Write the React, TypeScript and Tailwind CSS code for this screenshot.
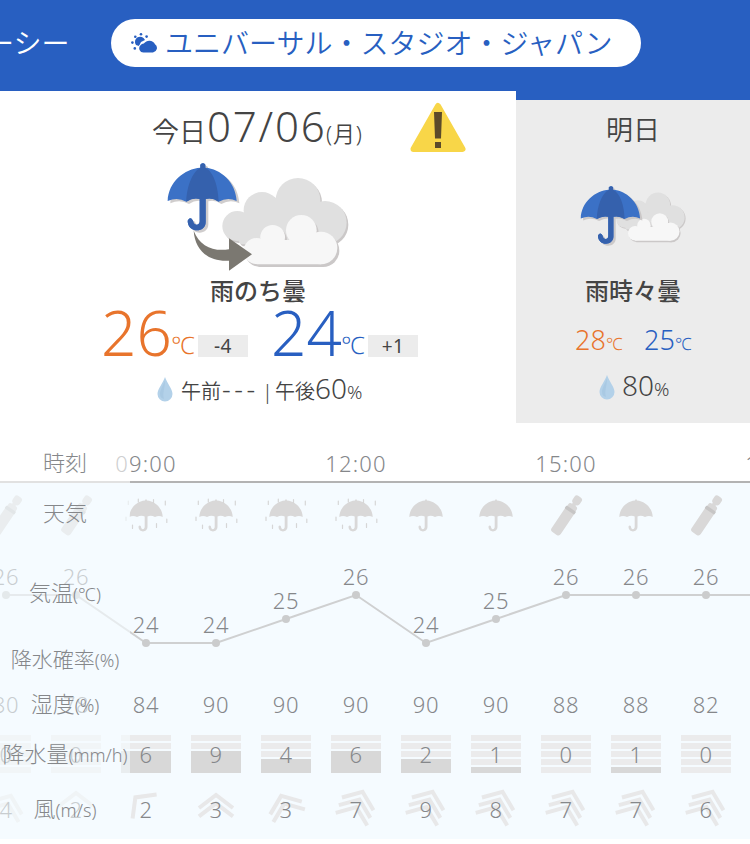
import React from "react";

type Hour = {
  time?: string;
  icon: "fold" | "rain" | "umbrella";
  temp: number;
  humidity: number;
  rain: number;
  level: number;
  wind: number;
  windLevel: number;
  windAngle: number;
};

const hours: Hour[] = [
  { icon: "fold", temp: 26, humidity: 80, rain: 0, level: 0, wind: 4, windLevel: 2, windAngle: 22 },
  { icon: "fold", temp: 26, humidity: 78, rain: 0, level: 0, wind: 2, windLevel: 1, windAngle: 0 },
  { time: "09:00", icon: "rain", temp: 24, humidity: 84, rain: 6, level: 3, wind: 2, windLevel: 1, windAngle: -45 },
  { icon: "rain", temp: 24, humidity: 90, rain: 9, level: 3, wind: 3, windLevel: 2, windAngle: 0 },
  { icon: "rain", temp: 25, humidity: 90, rain: 4, level: 2, wind: 3, windLevel: 2, windAngle: -22 },
  { time: "12:00", icon: "rain", temp: 26, humidity: 90, rain: 6, level: 3, wind: 7, windLevel: 3, windAngle: 22 },
  { icon: "umbrella", temp: 24, humidity: 90, rain: 2, level: 2, wind: 9, windLevel: 3, windAngle: 22 },
  { icon: "umbrella", temp: 25, humidity: 90, rain: 1, level: 1, wind: 8, windLevel: 3, windAngle: 22 },
  { time: "15:00", icon: "fold", temp: 26, humidity: 88, rain: 0, level: 0, wind: 7, windLevel: 3, windAngle: 22 },
  { icon: "umbrella", temp: 26, humidity: 88, rain: 1, level: 1, wind: 7, windLevel: 3, windAngle: 22 },
  { icon: "fold", temp: 26, humidity: 82, rain: 0, level: 0, wind: 6, windLevel: 3, windAngle: 22 },
];

function Umbrella() {
  const shape =
    "M234 303C236 245 285 206 332 203V194Q340 186 347 194V203C392 206 438 245 441 303Q414 290 387 305Q368 292 348 297V366C348 400 294 400 294 362Q302 348 310 362C312 378 330 378 330 364V297Q310 292 290 305Q263 290 234 303Z";
  return (
    <g>
      <path d={shape} transform="translate(8 7)" fill="#c4c1c1" opacity=".8" />
      <path d={shape} fill="#3b71c6" />
      <path
        d="M290 305C291 260 308 215 332 203V194Q340 186 347 194V203C372 215 386 260 387 305Q368 292 348 297V366C348 400 294 400 294 362Q302 348 310 362C312 378 330 378 330 364V297Q310 292 290 305Z"
        fill="#3561ad"
      />
    </g>
  );
}

function BackCloud({ fill }: { fill: string }) {
  return (
    <g fill={fill}>
      <circle cx="443" cy="378" r="45" />
      <circle cx="517" cy="331" r="55" />
      <circle cx="625" cy="301" r="67" />
      <circle cx="706" cy="368" r="65" />
      <path d="M443 340H706V433H455Q435 425 443 340Z" />
    </g>
  );
}

function FrontCloud({ fill }: { fill: string }) {
  return (
    <g fill={fill}>
      <circle cx="501" cy="453" r="39" />
      <circle cx="549" cy="412" r="37" />
      <circle cx="635" cy="391" r="46" />
      <circle cx="694" cy="444" r="49" />
      <path d="M501 420H694V493H501Z" />
    </g>
  );
}

function Clouds() {
  return (
    <g>
      <g transform="translate(5 6)"><BackCloud fill="#cbc8c8" /></g>
      <BackCloud fill="#e0e0e0" />
      <g transform="translate(6 8)"><FrontCloud fill="#cbc8c8" /></g>
      <FrontCloud fill="#f7f7f7" />
    </g>
  );
}

function Drop() {
  return (
    <svg width="16" height="25" viewBox="0 0 16 25" className="shrink-0">
      <path d="M8 0C10 6 15.500 12 15.500 17A7.500 7.500 0 0 1 .5 17C.5 12 6 6 8 0Z" fill="#b3d1e9" />
      <path d="M8 3C6 9 3 13 3 17A5 5 0 0 0 7 22C5 16 8 12 8 3Z" fill="#a9c9e3" />
    </svg>
  );
}

function SunCloud() {
  return (
    <svg width="26" height="20" viewBox="0 0 26 20" fill="#285fc1">
      <path d="M5 12A5.200 5.200 0 1 1 14 7L10 9L8 13Z" />
      <g>
        <circle cx="10" cy="1.300" r="1.300" />
        <circle cx="4.300" cy="3.800" r="1.300" />
        <circle cx="15.600" cy="3.600" r="1.300" />
        <circle cx="1.400" cy="9.600" r="1.300" />
        <circle cx="3.800" cy="15.400" r="1.300" />
      </g>
      <path
        d="M12.500 19.500A4.200 4.200 0 0 1 9.500 12.300A4 4 0 0 1 12.800 10.600A6.500 6.500 0 0 1 24 11.200A4.600 4.600 0 0 1 22 19.500Z"
        stroke="white"
        strokeWidth="1.400"
        paintOrder="stroke"
      />
    </svg>
  );
}

function HourIcon({ kind }: { kind: Hour["icon"] }) {
  if (kind === "fold") {
    return (
      <svg width="50" height="50" viewBox="0 0 50 50">
        <g transform="translate(26.700 26) rotate(34)" fill="#d9d8d8">
          <rect x="-5.500" y="-6" width="11" height="29.500" rx="3" />
          <rect x="-5" y="-11" width="10" height="7" rx="2.500" />
          <rect x="-4" y="-21" width="8.500" height="9" rx="3" />
          <path d="M-2 -13h4v3h-4z" />
          <rect x="-5.800" y="-6.500" width="11.600" height="3.500" rx=".8" fill="#c6c5c5" />
        </g>
      </svg>
    );
  }
  return (
    <svg width="50" height="50" viewBox="0 0 50 50">
      <path
        d="M8.300 29C8.500 20 16 13 24 12.400Q25 10 26 12.400C34 13 41.500 20 41.700 29Q38 26.800 34 29Q30 27 26.500 28.400V38.500C26.500 45 17.500 45 17.500 38.500Q18.800 36.500 20 38.500C20 42 23.700 42 23.700 38.500V28.400Q20 27 16 29Q12 26.800 8.300 29Z"
        fill="#d9d8d8"
      />
      {kind === "rain" && (
        <path
          d="M7.300 13v3.500M17.300 11v3M32.500 11.500v3.500M44.300 13v4M5 29v3.500M45.800 31v3.500M11.500 37v3.500M35.500 35.500v4"
          stroke="#d6d6d6"
          strokeWidth="1.200"
          strokeLinecap="round"
        />
      )}
    </svg>
  );
}

function Wind({ level, angle }: { level: number; angle: number }) {
  const top = level === 3 ? -17.5 : level === 2 ? -13 : -15;
  return (
    <svg width="50" height="50" viewBox="-25 -25 50 50" className="overflow-visible">
      <g transform={`rotate(${angle})`} fill="none" stroke="#e8e8e9" strokeWidth="4">
        {Array.from({ length: level }, (_, i) => (
          <path key={i} d={`M-17 ${top + i * 8.3 + 13}L0 ${top + i * 8.3}L17 ${top + i * 8.3 + 13}`} />
        ))}
      </g>
    </svg>
  );
}

function RainBar({ level }: { level: number }) {
  return (
    <div className="mb-[2px] flex h-[38px] w-[50px] flex-col gap-[2px]">
      {Array.from({ length: 5 - level }, (_, i) => (
        <div key={i} className="h-[6px] shrink-0 bg-[#ebebec]" />
      ))}
      {level > 0 && <div className="grow bg-[#d8d8d8]" />}
    </div>
  );
}

function Cells({ className, children }: { className: string; children: (h: Hour) => React.ReactNode }) {
  return (
    <div className={`-ml-[29px] flex w-[770px] ${className}`}>
      {hours.map((h, i) => (
        <div key={i} className="grid w-[70px] shrink-0 place-items-center *:[grid-area:1/1]">
          {children(h)}
        </div>
      ))}
    </div>
  );
}

function TempChart() {
  const y = (t: number) => 52 + (26 - t) * 24;
  const points = hours.map((h, i) => `${6 + i * 70},${y(h.temp)}`).join(" ") + " 776,52";
  return (
    <svg width="750" height="102" className="block overflow-visible">
      <polyline points={points} fill="none" stroke="#cfd0d1" strokeWidth="2" />
      {hours.map((h, i) => (
        <g key={i}>
          <circle cx={6 + i * 70} cy={y(h.temp)} r="4" fill="#cbcccd" />
          <text x={6 + i * 70} y={y(h.temp) - 10} textAnchor="middle" fontSize="22" letterSpacing=".6" fill="#85878a">
            {h.temp}
          </text>
        </g>
      ))}
    </svg>
  );
}

const labels = [
  { name: "時刻", unit: "", style: "h-[39px] bg-white/60 pb-[3px]" },
  { name: "天気", unit: "", style: "h-[60px] bg-[#f5fbff]/60 pb-[2px]" },
  { name: "気温", unit: "(℃)", style: "h-[102px] bg-[#f5fbff]/60 pb-[3px]" },
  { name: "降水確率", unit: "(%)", style: "h-[32px] bg-[#f5fbff]/60 pb-[2px] text-[21px]" },
  { name: "湿度", unit: "(%)", style: "h-[56px] bg-[#f5fbff]/60 pb-[3px]" },
  { name: "降水量", unit: "(mm/h)", style: "h-[44px] bg-[#f5fbff]/60 pb-[3px]" },
  { name: "風", unit: "(m/s)", style: "h-[62px] bg-[#f5fbff]/60 pt-[1px]" },
];

function Temp({ value, diff, className }: { value: string; diff: string; className: string }) {
  return (
    <div className="flex items-end">
      <span className={`w-[70px] pb-[2px] text-[62px] leading-[46px] ${className}`}>{value}</span>
      <span className={`w-[27px] text-[24px] leading-[24px] ${className}`}>℃</span>
      <span className="h-[22px] w-[50px] bg-[#ececec] text-center text-[19px] leading-[23px] font-normal tracking-[.5px]">{diff}</span>
    </div>
  );
}

export default function App() {
  return (
    <div className="h-[844px] w-[750px] overflow-hidden bg-white font-['Noto_Sans','Noto_Sans_CJK_JP',sans-serif] font-[350] text-[#444]">
      <header className="flex h-[91px] items-start bg-[#285fc1] pt-[19px] whitespace-nowrap">
        <span className="-ml-[14px] w-[125px] text-[28px] leading-[48px] text-white">ーシー</span>
        <div className="flex h-[48px] w-[530px] items-center rounded-full bg-white pl-[20px] text-[#285fc1]">
          <SunCloud />
          <span className="ml-[8px] text-[28px] leading-[48px]">ユニバーサル・スタジオ・ジャパン</span>
        </div>
      </header>

      <main className="flex h-[332px]">
        <section className="flex w-[516px] flex-col">
          <div className="flex h-[69px] items-start pl-[152px]">
            <div className="flex h-[69px] w-[257px] items-baseline whitespace-nowrap">
              <span className="w-[55px] text-[27px]">今日</span>
              <span className="w-[119px] text-[42px] leading-[70px] tracking-[1.800px]">07/06</span>
              <span className="text-[22px] tracking-[.8px]">(月)</span>
            </div>
            <svg width="58" height="52" viewBox="0 0 58 52" className="mt-[10px]">
              <path d="M29 5L53.500 48H4.500Z" fill="#f8d648" stroke="#f8d648" strokeWidth="6" strokeLinejoin="round" />
              <path d="M25 11h8l-1 26.500h-6zM26 41h6v6h-6z" fill="#5b4b2a" />
            </svg>
          </div>
          <svg width="186.670" height="113.330" viewBox="220 180 560 340" className="ml-[163.300px] shrink-0">
            <Umbrella />
            <Clouds />
            <path d="M312 392C330 438 368 455 418 448V415L487 463L418 512V482C355 486 316 450 312 392Z" fill="#7b7871" />
          </svg>
          <div className="mt-[1px] h-[34px] text-center text-[24px] leading-[34px] font-medium">雨のち曇</div>
          <div className="flex h-[49px] items-end gap-[23px] pl-[101px]">
            <Temp value="26" diff="-4" className="text-[#e8742c]" />
            <Temp value="24" diff="+1" className="text-[#285fc1]" />
          </div>
          <div className="mt-[14px] flex h-[36px] items-center pl-[157px] whitespace-nowrap">
            <Drop />
            <span className="ml-[8px] flex h-[36px] items-baseline text-[20px] leading-[34px]">
              午前
              <span className="w-[41px] pl-px text-[27px] leading-[34px] tracking-[3.500px]">---</span>
              <span className="w-[13px]">|</span>午後
              <span className="text-[28px] leading-[34px]">60</span>
              <span className="text-[19px]">%</span>
            </span>
          </div>
        </section>

        <section className="grow border-t-[9px] border-[#285fc1] bg-[#ececec]">
          <div className="h-[58px] text-center text-[27px] leading-[60px]">明日</div>
          <svg width="113.330" height="66.670" viewBox="180 35 340 200" className="mt-[23.700px] ml-[60px] block">
            <g transform="translate(82 -64) scale(.55 .558)"><Clouds /></g>
            <g transform="translate(-7 -116) scale(.86)"><Umbrella /></g>
          </svg>
          <div className="mt-[26px] h-[34px] text-center text-[24px] leading-[34px] font-medium">雨時々曇</div>
          <div className="mt-[12px] flex h-[40px] items-baseline pl-[59px] leading-[40px]">
            <span className="w-[31px] text-[27px] text-[#e8742c]">28</span>
            <span className="w-[38px] text-[17px] text-[#e8742c]">℃</span>
            <span className="w-[31px] text-[27px] text-[#285fc1]">25</span>
            <span className="text-[17px] text-[#285fc1]">℃</span>
          </div>
          <div className="mt-[7px] flex h-[40px] items-center pl-[83px]">
            <Drop />
            <span className="-mt-[5px] ml-[7px] h-[40px] text-[28px] leading-[40px]">80<span className="text-[19px]">%</span></span>
          </div>
        </section>
      </main>

      <section className="relative mt-[21px] h-[395px] overflow-hidden text-[22px] font-light tracking-[.6px] text-[#85878a]">
        <div className="-ml-[64px] flex h-[39px] w-[1050px] border-b-2 border-[#b3b3b3] pl-[105px] text-center leading-[38px] tracking-[1.200px]">
          <span className="w-[210px]">09:00</span>
          <span className="w-[210px]">12:00</span>
          <span className="w-[210px]">15:00</span>
          <span className="w-[210px]">18:00</span>
        </div>
        <div className="h-[356px] bg-[#f5fbff]">
          <Cells className="h-[60px]">{(h) => <HourIcon kind={h.icon} />}</Cells>
          <TempChart />
          <Cells className="mt-[32px] h-[56px]">{(h) => <span className="pb-[2px]">{h.humidity}</span>}</Cells>
          <Cells className="h-[44px]">
            {(h) => (
              <>
                <RainBar level={h.level} />
                <span className="pb-[2px]">{h.rain}</span>
              </>
            )}
          </Cells>
          <Cells className="h-[62px]">
            {(h) => (
              <>
                <Wind level={h.windLevel} angle={h.windAngle} />
                <span className="pt-[2px]">{h.wind}</span>
              </>
            )}
          </Cells>
        </div>
        <div className="absolute top-0 left-0 w-[130px] tracking-normal text-[#85878a]">
          {labels.map((l) => (
            <div key={l.name} className={`flex items-center justify-center whitespace-nowrap ${l.style}`}>
              <span>
                {l.name}
                <span className="text-[18px]">{l.unit}</span>
              </span>
            </div>
          ))}
        </div>
      </section>
    </div>
  );
}
